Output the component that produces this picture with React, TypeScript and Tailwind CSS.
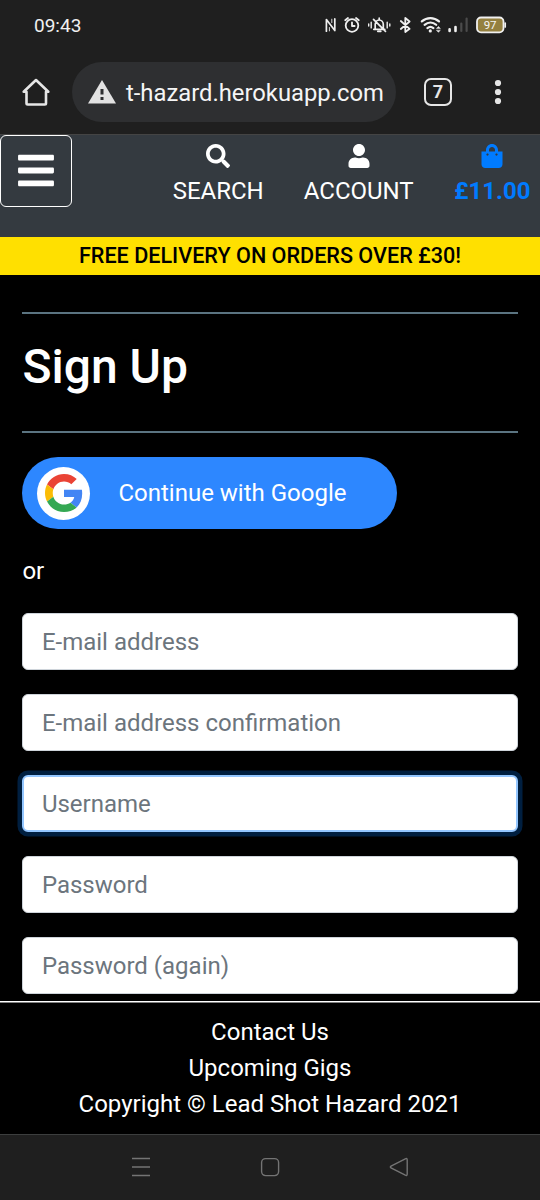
import type { ReactNode } from 'react';
import { FaBars, FaSearch, FaShoppingBag, FaUser } from 'react-icons/fa';

function StatusBar() {
  return (
    <div className="flex h-[50px] shrink-0 items-center justify-between pr-[33px] pl-[34px]">
      <span className="text-[19px] leading-none text-[#f0f0f0]">09:43</span>
      <svg width="183" height="26" viewBox="324 12 183 26" fill="none" stroke="#f0f0f0" strokeWidth="1.8" strokeLinecap="round" strokeLinejoin="round">
        <path d="M326.4 31.2V19.6L334.8 30.6V18.9" strokeWidth="1.7" />
        <path d="M329.4 27.5v3.4M331.8 22.6v-3.4" strokeWidth="0.9" />
        <circle cx="352" cy="25.5" r="6.3" />
        <path d="M352 22.3V26h2.6M345.2 20.3L348 18M358.8 20.3L356 18" />
        <path d="M373.8 29.3h11M375.2 29v-4.5c0-2.7 1.8-4.5 4-4.5s4.1 1.8 4.1 4.5V29M379.2 18.2v1.4M377.8 31.3h3M373.5 19.3l12 12" strokeWidth="1.7" />
        <path d="M371.2 22.3v5.6M387.2 22.3v5.6M368.7 24v2M389.8 24v2" strokeWidth="1.4" />
        <path d="M400.8 21L409.6 28.8L405.3 32V18L409.6 21.5L400.8 29" />
        <path d="M421.8 21.4c5-4.4 12.2-4.4 17.2 0M424.6 24.8c3.5-3 8.2-3 11.6 0M427.4 28.1c1.8-1.5 4.2-1.5 6 0" strokeWidth="2.2" />
        <circle cx="430.3" cy="30.9" r="1.6" fill="#f0f0f0" stroke="none" />
        <path d="M436.7 28.2l1.7-1.7 1.7 1.7ZM436.7 30.5l1.7 1.7 1.7-1.7Z" fill="#f0f0f0" strokeWidth="0.6" />
        <path d="M449.6 29.4v1.5M455.5 27v3.9" strokeWidth="2.6" />
        <path d="M461.3 23.5V31M466.6 18.5V31" stroke="#4b4b4b" strokeWidth="2.2" />
        <rect x="477" y="17.5" width="26.5" height="14.8" rx="4" fill="#94803f" />
        <path d="M505.2 23v4" strokeWidth="1.7" />
        <text x="490.1" y="28.9" textAnchor="middle" fontSize="11.5" fill="#f5f5f5" stroke="none">97</text>
      </svg>
    </div>
  );
}

function BrowserBar() {
  return (
    <div className="flex h-[85px] shrink-0 items-start border-b border-[#444] pt-3 pl-[20px]">
      <svg className="mt-[14px]" width="32" height="32" viewBox="20 76 32 32" fill="none" stroke="#e6e6e6" strokeWidth="2.6" strokeLinejoin="round" strokeLinecap="round">
        <path d="M23.7 91.8L36 80L48.3 91.8H46V103.3Q46 104.5 44.8 104.5H27.7Q26.5 104.5 26.5 103.3V91.8Z" />
      </svg>
      <div className="ml-[20px] flex h-[60px] w-[324px] items-center rounded-full bg-[#2e2f31] pl-[16px]">
        <svg width="28" height="24" viewBox="0 0 28 24">
          <path d="M14 0L28 23.5H0Z" fill="#e2e2e2" />
          <path d="M12.5 9h3v5.5h-3zM12.5 17h3v3h-3z" fill="#2e2f31" />
        </svg>
        <span className="mt-[4px] ml-[10px] text-[23.8px] leading-none whitespace-nowrap text-[#f5f5f5]">t-hazard.herokuapp.com</span>
      </div>
      <div className="mt-[16px] ml-[28px] flex h-[28px] w-[28px] items-center justify-center rounded-[7px] border-[2.5px] border-[#e6e6e6] text-[18px] leading-none font-bold text-[#e6e6e6]">7</div>
      <svg className="mt-[16px] ml-[42px]" width="8" height="28" fill="#e6e6e6">
        <circle cx="4" cy="5" r="3.1" />
        <circle cx="4" cy="14" r="3.1" />
        <circle cx="4" cy="23" r="3.1" />
      </svg>
    </div>
  );
}

function NavItem({ icon, label, className }: { icon: ReactNode; label: string; className: string }) {
  return (
    <a className={`flex flex-col items-center text-[24px] leading-[36px] ${className}`}>
      <span className="flex h-[24px] items-center">{icon}</span>
      <span className="mt-[5px] whitespace-nowrap">{label}</span>
    </a>
  );
}

function SiteHeader() {
  return (
    <header className="shrink-0">
      <div className="flex h-[102px] items-start bg-[#343a40]">
        <button className="flex h-[72px] w-[72px] items-center justify-center rounded-[6px] border-[1.5px] border-white pb-[2px] text-white">
          <FaBars className="h-[41px] w-[36px]" />
        </button>
        <div className="flex grow justify-end pt-[9px] pr-[9.5px]">
          <NavItem icon={<FaSearch size={24} />} label="SEARCH" className="text-white" />
          <NavItem icon={<FaUser size={24} />} label="ACCOUNT" className="ml-[40px] text-white" />
          <NavItem icon={<FaShoppingBag size={24} />} label="£11.00" className="ml-[40.5px] font-bold text-[#007bff]" />
        </div>
      </div>
      <div className="flex h-[37.5px] items-center justify-center bg-[#ffe000] pt-[1px] text-[21.6px] leading-none font-medium text-black">
        FREE DELIVERY ON ORDERS OVER £30!
      </div>
    </header>
  );
}

function GoogleLogo() {
  return (
    <svg width="38" height="38" viewBox="0 0 48 48">
      <path fill="#EA4335" d="M24 9.5c3.54 0 6.71 1.22 9.21 3.6l6.85-6.85C35.9 2.38 30.47 0 24 0 14.62 0 6.51 5.38 2.56 13.22l7.98 6.19C12.43 13.72 17.74 9.5 24 9.5z" />
      <path fill="#4285F4" d="M46.98 24.55c0-1.57-.15-3.09-.38-4.55H24v9.02h12.94c-.58 2.96-2.26 5.48-4.78 7.18l7.73 6c4.51-4.18 7.09-10.36 7.09-17.65z" />
      <path fill="#FBBC05" d="M10.53 28.59c-.48-1.45-.76-2.99-.76-4.59s.27-3.14.76-4.59l-7.98-6.19C.92 16.46 0 20.12 0 24c0 3.88.92 7.54 2.56 10.78l7.97-6.19z" />
      <path fill="#34A853" d="M24 48c6.48 0 11.93-2.13 15.89-5.81l-7.73-6c-2.15 1.45-4.92 2.3-8.16 2.3-6.26 0-11.57-4.22-13.47-9.91l-7.98 6.19C6.51 42.62 14.62 48 24 48z" />
    </svg>
  );
}

const fields = [
  { label: 'E-mail address', type: 'email', focused: false },
  { label: 'E-mail address confirmation', type: 'email', focused: false },
  { label: 'Username', type: 'text', focused: true },
  { label: 'Password', type: 'password', focused: false },
  { label: 'Password (again)', type: 'password', focused: false },
];

function SignUp() {
  return (
    <main className="flex h-[726.5px] shrink-0 flex-col items-start overflow-hidden px-[22.4px] pt-[37.5px]">
      <div className="h-[2px] w-full shrink-0 bg-[#5b7481]" />
      <h1 className="mt-[24px] text-[48px] leading-[57.6px] font-medium">Sign Up</h1>
      <div className="mt-[35.5px] h-[2px] w-full shrink-0 bg-[#5b7481]" />
      <button className="mt-[24px] flex h-[72px] w-[375px] shrink-0 items-center rounded-full bg-[#2d87ff] pl-[15px] text-[24px]">
        <span className="flex h-[53px] w-[53px] items-center justify-center rounded-full bg-white">
          <GoogleLogo />
        </span>
        <span className="ml-[28px]">Continue with Google</span>
      </button>
      <p className="mt-[24px] text-[24px] leading-[36px]">or</p>
      <form className="mt-[24px] flex w-full flex-col gap-[24px]">
        {fields.map(({ label, type, focused }) => (
          <input
            key={label}
            type={type}
            placeholder={label}
            className={`h-[57px] w-full shrink-0 rounded-[6px] bg-white text-[24px] text-[#495057] outline-none placeholder:text-[#6c757d] placeholder:opacity-100 ${
              focused
                ? 'border-2 border-[#93c6ff] px-[17.5px] shadow-[0_0_0_4.5px_rgba(0,123,255,0.25)]'
                : 'border border-[#ced4da] px-[18.5px]'
            }`}
          />
        ))}
      </form>
    </main>
  );
}

export default function App() {
  return (
    <div className="flex h-[1200px] w-[540px] flex-col overflow-hidden bg-[#1f1f1f] font-['Roboto',sans-serif] text-white">
      <StatusBar />
      <BrowserBar />
      <div className="flex h-[999px] shrink-0 flex-col bg-black">
        <SiteHeader />
        <SignUp />
        <footer className="grow bg-black text-center text-[24px] leading-[36px]">
          <div className="mb-[10.9px] h-[2px] bg-gradient-to-b from-white from-50% to-[#808080] to-50%" />
          <p>Contact Us</p>
          <p>Upcoming Gigs</p>
          <p>Copyright © Lead Shot Hazard 2021</p>
        </footer>
      </div>
      <div className="grow border-t border-[#3c3e3e]">
        <svg width="540" height="65" viewBox="0 1135 540 65" fill="none" stroke="#747474" strokeWidth="1.4">
          <path d="M132 1158.5h18M132 1167h18M132 1175.5h18" />
          <rect x="261.6" y="1158.6" width="17" height="17" rx="4" />
          <path d="M391 1166.2L405.3 1158.8Q407.2 1158 407.2 1160V1174Q407.2 1176 405.3 1175.2L391 1168Q389.7 1167.1 391 1166.2Z" />
        </svg>
      </div>
    </div>
  );
}
